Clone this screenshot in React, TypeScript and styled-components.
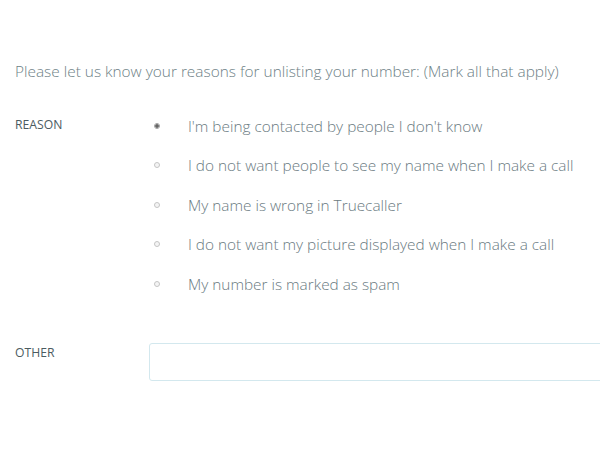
import styled, { createGlobalStyle } from "styled-components";

const reasons = [
  "I'm being contacted by people I don't know",
  "I do not want people to see my name when I make a call",
  "My name is wrong in Truecaller",
  "I do not want my picture displayed when I make a call",
  "My number is marked as spam",
];

const GlobalStyle = createGlobalStyle`
  html, body {
    margin: 0;
    padding: 0;
    background: #ffffff;
    overflow: hidden;
  }
  body {
    font-family: "Open Sans", "Liberation Sans", sans-serif;
  }
`;

export default function App() {
  return (
    <>
      <GlobalStyle />
      <Page>
        <Intro>
          Please let us know your reasons for unlisting your number: (Mark all
          that apply)
        </Intro>
        <FieldRow>
          <FieldLabel>REASON</FieldLabel>
          <OptionList>
            {reasons.map((reason, idx) => (
              <Option key={idx}>
                <Dot checked={idx === 0} />
                <OptionText>{reason}</OptionText>
              </Option>
            ))}
          </OptionList>
        </FieldRow>
        <OtherRow>
          <FieldLabel>OTHER</FieldLabel>
          <OtherInput type="text" />
        </OtherRow>
      </Page>
    </>
  );
}

const Page = styled.div`
  width: 600px;
  height: 450px;
  padding: 62px 0 0 15px;
  box-sizing: border-box;
  overflow: hidden;
`;

const Intro = styled.p`
  margin: 0;
  font-size: 15.4px;
  line-height: 20px;
  font-weight: 300;
  color: #6e7f86;
  white-space: nowrap;
`;

const FieldRow = styled.div`
  display: grid;
  grid-template-columns: 134px 1fr;
  margin-top: 24px;
`;

const FieldLabel = styled.div`
  font-size: 12.2px;
  line-height: 20px;
  color: #4b5b61;
  padding-top: 9px;
`;

const OptionList = styled.div`
  display: flex;
  flex-direction: column;
`;

const Option = styled.div`
  display: flex;
  align-items: center;
  height: 39.5px;
`;

const Dot = styled.span<{ checked: boolean }>`
  width: 6px;
  height: 6px;
  margin-left: 5px;
  margin-right: 28px;
  border-radius: 50%;
  box-sizing: border-box;
  border: 1px solid ${({ checked }) => (checked ? "#a0a0a0" : "#c4c4c4")};
  background: ${({ checked }) =>
    checked ? "radial-gradient(circle, #666 0 1.5px, #e0e0e0 2px)" : "#f4f4f4"};
`;

const OptionText = styled.span`
  font-size: 15.35px;
  line-height: 20px;
  font-weight: 300;
  color: #6a7a81;
  white-space: nowrap;
`;

const OtherRow = styled.div`
  display: grid;
  grid-template-columns: 134px 1fr;
  margin-top: 39px;

  ${FieldLabel} {
    padding-top: 0;
  }
`;

const OtherInput = styled.input`
  width: 480px;
  height: 38px;
  box-sizing: border-box;
  border: 1px solid #d3e8ee;
  border-radius: 3px;
  background: #ffffff;
  outline: none;
  padding: 0 10px;
`;
